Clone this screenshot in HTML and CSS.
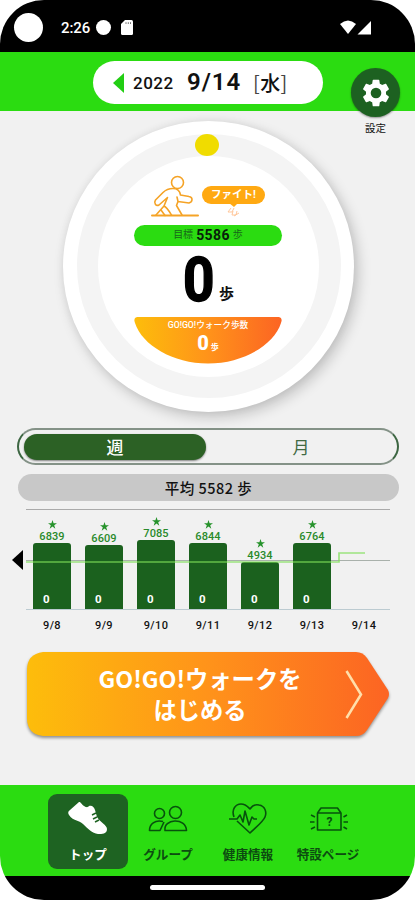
FILE: index.html
```html
<!DOCTYPE html>
<html lang="ja">
<head>
<meta charset="utf-8">
<title>GO!GO!ウォーク</title>
<link rel="stylesheet" href="styles.css">
</head>
<body>
<div class="phone">
  <div class="status">
    <span class="camera"></span>
    <span class="clock">2:26</span>
    <span class="notice"></span>
    <svg class="sd" viewBox="0 0 12 15"><path d="M4 0H10.500Q12 0 12 1.500V13.500Q12 15 10.500 15H1.500Q0 15 0 13.500V4Z"/><path class="sd-pins" d="M5 2.200V4M7.300 2.200V4M9.500 2.200V4"/></svg>
    <svg class="signal" viewBox="0 0 32 15"><path d="M0 4Q8-3 16 4L8 14Z"/><path d="M31 1V14.500H17.500Z"/></svg>
  </div>

  <header class="header">
    <div class="date">
      <svg class="prev" viewBox="0 0 11 20"><path d="M11 0V20L0 10Z"/></svg>
      <span class="year">2022</span>
      <span class="day">9/14</span>
      <span class="weekday"><i>[</i>水<i>]</i></span>
    </div>
    <div class="settings">
      <span class="gear">
        <svg viewBox="0 0 24 24"><path d="M19.430 12.980c.04-.32.07-.64.07-.98s-.03-.66-.07-.98l2.110-1.650c.19-.15.24-.42.12-.64l-2-3.460c-.12-.22-.39-.3-.61-.22l-2.490 1c-.52-.4-1.080-.73-1.690-.98l-.38-2.650C14.460 2.180 14.250 2 14 2h-4c-.25 0-.46.18-.49.42l-.38 2.650c-.61.25-1.170.59-1.690.98l-2.490-1c-.23-.09-.49 0-.61.22l-2 3.460c-.13.22-.07.49.12.64l2.110 1.650c-.04.32-.07.65-.07.98s.03.66.07.98l-2.110 1.650c-.19.15-.24.42-.12.64l2 3.460c.12.22.39.3.61.22l2.490-1c.52.4 1.080.73 1.690.98l.38 2.650c.03.24.24.42.49.42h4c.25 0 .46-.18.49-.42l.38-2.650c.61-.25 1.170-.59 1.690-.98l2.490 1c.23.09.49 0 .61-.22l2-3.460c.12-.22.07-.49-.12-.64z"/><circle cx="12" cy="12" r="4"/></svg>
      </span>
      <span class="settings-label">設定</span>
    </div>
  </header>

  <main class="main">
    <section class="dial">
      <span class="marker"></span>
      <div class="ring">
        <div class="face">
          <div class="cheer">
            <svg class="runner" viewBox="0 0 48 43">
              <circle cx="26.500" cy="7.500" r="6"/>
              <path d="M22 13.500C17 13.500 14 15.500 12 17.500L4.500 25C2.500 28 5 31.500 8 30L16.500 22.500M22 13.500C28 13.500 29 17 29.500 20L38 21.500C42 22 42 27 38 28L27 26.500L25.500 30.500L31 40M16.500 22.500L13 31C16 32.500 18 36 20.500 40M13 31L5 40M10 35L14 40.500M27 26.500L26 22"/>
              <path class="ground" d="M1 40.500H47"/>
            </svg>
            <div class="bubble">ファイト!
              <svg class="tail" viewBox="0 0 16 15"><path class="tip" d="M4 0H13L9 4Z"/><path class="dust" d="M6 5L3 9H7L9 5M8 8L7 12H11L12 8M9 13L14 10"/></svg>
            </div>
          </div>
          <div class="goal"><span>目標</span><b>5586</b><span>歩</span></div>
          <div class="steps"><b>0</b><span>歩</span></div>
          <div class="gogo">
            <svg class="bowl" viewBox="0 0 148 47">
              <defs><linearGradient id="warm" x1="0" x2="1" y1="0" y2="0"><stop offset="0" stop-color="#fdbd0b"/><stop offset=".5" stop-color="#ff931a"/><stop offset="1" stop-color="#fc6423"/></linearGradient></defs>
              <path d="M3 0H145Q149 1 147 6C140 28 109 46.500 74 46.500S8 28 1 6Q-1 1 3 0Z" fill="url(#warm)"/>
            </svg>
            <span class="gogo-title">GO!GO!ウォーク歩数</span>
            <span class="gogo-value"><b>0</b>歩</span>
          </div>
        </div>
      </div>
    </section>

    <div class="segments"><span class="segment on">週</span><span class="segment">月</span></div>
    <div class="average">平均 5582 歩</div>

    <section class="chart">
      <svg width="0" height="0" class="defs"><symbol id="star" viewBox="0 0 10 10"><path d="M5 0L6.200 3.600H10L6.900 5.900L8.100 9.600L5 7.300L1.900 9.600L3.100 5.900L0 3.600H3.800Z"/></symbol></svg>
      <div class="bars">
        <div class="col"><svg class="star"><use href="#star"/></svg><span class="value">6839</span><div class="bar" style="height:66px">0</div></div>
        <div class="col"><svg class="star"><use href="#star"/></svg><span class="value">6609</span><div class="bar" style="height:64px">0</div></div>
        <div class="col"><svg class="star"><use href="#star"/></svg><span class="value">7085</span><div class="bar" style="height:69px">0</div></div>
        <div class="col"><svg class="star"><use href="#star"/></svg><span class="value">6844</span><div class="bar" style="height:66px">0</div></div>
        <div class="col"><svg class="star"><use href="#star"/></svg><span class="value">4934</span><div class="bar" style="height:47px">0</div></div>
        <div class="col"><svg class="star"><use href="#star"/></svg><span class="value">6764</span><div class="bar" style="height:66px">0</div></div>
        <div class="col"></div>
      </div>
      <svg class="target" viewBox="0 0 364 100"><path d="M0 53H313V44H339"/></svg>
      <div class="days"><span>9/8</span><span>9/9</span><span>9/10</span><span>9/11</span><span>9/12</span><span>9/13</span><span>9/14</span></div>
      <svg class="older" viewBox="0 0 11 20"><path d="M11 0V20L0 10Z"/></svg>
    </section>

    <div class="start">
      <svg class="start-shape" viewBox="0 0 363 84"><path d="M16 0H329Q336 0 340 6L361 38Q363 42 361 46L340 78Q336 84 329 84H16Q0 82 0 66V18Q0 2 16 0Z" fill="url(#warm)"/><path class="chevron" d="M319.500 19L334 42.500L319.500 66"/></svg>
      <span class="start-text">GO!GO!ウォークを<br>はじめる</span>
    </div>
  </main>

  <nav class="tabs">
    <div class="tab active">
      <svg viewBox="0 0 40 34"><path class="shoe" d="M11 1C13 1 13 3 16 5C19 7 20 6 21 5C24 4 26 6 27 9L29 16C32 21 39 24 39 28C39 33 34 33 30 33C24 32 20 28 15 23C11 19 5 20 1 14Q-1 11 2 9Z"/><path class="laces" d="M28 12L24 14M29 16L25 18M31 19L27 21"/></svg>
      <span>トップ</span>
    </div>
    <div class="tab">
      <svg viewBox="0 0 40 34"><circle cx="11.500" cy="12.500" r="5"/><circle cx="27.500" cy="11.500" r="6"/><path d="M15 20.500C7 18.500 1.500 23 1.500 29.500H12L16 21M17 29.500C15 17.500 38 16 38.500 29.500Z"/></svg>
      <span>グループ</span>
    </div>
    <div class="tab">
      <svg viewBox="0 0 40 34"><path d="M6 16C3 8 8 3 13 3C18 3 20 6 22 8C24 5 27 3 31 4C37 5 39 11 37 16C35 21 27 27 22 32L9 20M1 18H9L12 14L15 21L17 10L21 24L24 16L26 18H29"/></svg>
      <span>健康情報</span>
    </div>
    <div class="tab">
      <svg viewBox="0 0 40 34"><path d="M9.500 12H33V29H9.500ZM9.500 12L13 7H29.500L33 12M3 14L7 16M2 21H6.500M3 28L7 26M39 14L35.500 16M40 21H35.500M39 28L35.500 26"/><text x="21.500" y="25">?</text></svg>
      <span>特設ページ</span>
    </div>
  </nav>
  <div class="home"><span></span></div>
</div>
</body>
</html>
```

FILE: styles.css
```css
* { box-sizing: border-box; }
body { margin: 0; background: #fff; font-family: Roboto, "Noto Sans CJK JP", sans-serif; color: #111; }
svg { display: block; }
.phone { width: 415px; height: 900px; display: flex; flex-direction: column; border-radius: 44px; overflow: hidden; background: #f1f1f1; }

.status { height: 52px; flex: none; background: #000; color: #fff; display: flex; align-items: center; padding: 3px 43px 0 14px; }
.camera { width: 29px; height: 29px; border-radius: 50%; background: #fff; }
.clock { margin-left: 18px; width: 30px; font-size: 15px; font-weight: 500; letter-spacing: -.1px; padding-top: 1px; }
.notice { width: 15px; height: 15px; margin-left: 5px; border-radius: 50%; background: #fff; }
.sd { width: 12px; height: 15px; margin-left: 10px; fill: #fff; }
.sd-pins { stroke: #555; stroke-width: .8; }
.signal { width: 32px; height: 15px; margin-left: auto; fill: #fff; }

.header { height: 59px; flex: none; background: #2bdc11; position: relative; padding: 9px 0 0 93px; }
.date { width: 230px; height: 43px; border-radius: 22px; background: #fff; display: flex; align-items: center; padding-left: 20px; white-space: nowrap; }
.prev { width: 11px; height: 20px; fill: #22ce13; }
.year { margin-left: 9px; width: 41px; font-size: 17px; font-weight: 500; letter-spacing: .5px; }
.day { margin-left: 13px; width: 54px; font-size: 24px; line-height: 28px; font-weight: 600; letter-spacing: 1px; padding-bottom: 1px; height: 30px; }
.weekday { margin-left: 12px; font: 500 20px "Noto Sans CJK JP", sans-serif; letter-spacing: .4px; }
.weekday i { font-style: normal; font-weight: 400; color: #444; }
.settings { position: absolute; z-index: 2; left: 351px; top: 16px; width: 49px; display: flex; flex-direction: column; align-items: center; }
.gear { width: 49px; height: 49px; border-radius: 50%; background: #1d6121; display: flex; align-items: center; justify-content: center; box-shadow: 0 1px 2px #0006; }
.gear svg { width: 32px; height: 32px; fill: #fff; }
.gear circle { fill: #1d6121; }
.settings-label { margin-top: 4px; font-size: 10.500px; line-height: 16px; }

.main { flex: 1; display: flex; flex-direction: column; }
.dial { position: relative; flex: none; width: 291px; height: 291px; margin: 9.500px 0 0 63px; border-radius: 50%; background: #fff; padding: 13.500px; box-shadow: 4px 5px 14px #0003, 0 0 8px #0000000d; }
.marker { position: absolute; left: 132px; top: 13px; width: 24px; height: 22px; border-radius: 50%; background: #f0dc00; }
.ring { height: 264px; border-radius: 50%; background: #f4f4f4; padding: 21.500px; }
.face { height: 221px; border-radius: 50%; background: #fff; display: flex; flex-direction: column; align-items: center; padding: 19px 1px 0 0; }
.cheer { height: 43px; width: 114px; display: flex; flex: none; }
.runner { width: 48px; height: 43px; fill: none; stroke: #f5a326; stroke-width: 1.600; stroke-linecap: round; stroke-linejoin: round; }
.ground { stroke-width: 2; }
.bubble { position: relative; width: 63px; height: 18px; margin: 11px 0 0 3px; border-radius: 9px; background: #ffa912; color: #fff; font-size: 10.500px; line-height: 18px; text-align: center; font-weight: 700; white-space: nowrap; flex: none; }
.tail { position: absolute; width: 16px; height: 15px; left: 23px; top: 17px; }
.tip { fill: #ffa912; }
.dust { fill: none; stroke: #ffc79b; stroke-width: 1; }
.goal { width: 148px; height: 21px; margin-top: 7px; border-radius: 11px; background: #2bdc11; display: flex; justify-content: center; align-items: center; gap: 3px; font-size: 10px; flex: none; line-height: 20px; color: #17671a; }
.goal b { font-size: 14px; letter-spacing: .4px; color: #08200a; }
.steps { height: 71px; width: 148px; display: flex; align-items: flex-end; flex: none; padding-left: 49px; }
.steps b { font-family: Roboto, sans-serif; font-size: 61px; line-height: 72px; width: 36px; height: 73px; -webkit-text-stroke: 1.500px #000; color: #000; transform: scaleX(.9); transform-origin: left; }
.steps span { font-size: 15px; line-height: 20px; font-weight: 700; margin-bottom: 13px; }
.gogo { position: relative; width: 148px; height: 47px; flex: none; display: flex; flex-direction: column; align-items: center; color: #fff; }
.bowl { position: absolute; left: 0; top: 0; width: 148px; height: 47px; }
.gogo-title { position: relative; font-size: 8.700px; line-height: 12px; margin-top: 2px; font-weight: 500; white-space: nowrap; }
.gogo-value { position: relative; font-size: 8px; line-height: 24px; font-weight: 700; }
.gogo-value b { font-size: 20px; margin-right: 2px; }

.segments { width: 382px; height: 37px; margin: 16.500px 0 0 17px; border: 2px solid #3d6642; border-top-color: #849287; border-bottom-color: #849287; border-radius: 19px; display: flex; padding: 4px 5px; flex: none; }
.segment { width: 182px; height: 26px; border-radius: 13px; text-align: center; font: 17px/26px "Noto Sans CJK JP", sans-serif; color: #416a43; padding-left: 8px; }
.segment.on { background: #2c6125; color: #fff; font-weight: 500; box-shadow: 0 1px 2px #0007; padding-left: 0; }
.average { width: 381px; height: 27px; margin: 9px 0 0 18px; border-radius: 14px; background: #c8c8c8; text-align: center; font: 500 14.500px/28px "Noto Sans CJK JP", sans-serif; letter-spacing: .5px; flex: none; }

.chart { position: relative; margin: 8px 0 0 26px; width: 364px; height: 126px; flex: none; }
.defs { position: absolute; }
.bars { height: 101px; display: flex; align-items: flex-end; border-top: 1px solid #aaa; border-bottom: 1px solid #bccbd1; background: linear-gradient(#a9b1ab, #a9b1ab) 0 50px / 100% 1px no-repeat; }
.col { width: 52px; display: flex; flex-direction: column; align-items: center; }
.star { width: 9px; height: 9px; margin-bottom: 1px; fill: #26922b; }
.value { font-size: 11px; line-height: 13px; font-weight: 500; letter-spacing: .1px; color: #298a2b; }
.bar { width: 38px; border-radius: 3px 3px 0 0; background: #1b611e; color: #fff; display: flex; align-items: flex-end; padding: 0 0 3px 10px; font-size: 11.500px; line-height: 13px; font-weight: 700; }
.target { position: absolute; left: 0; top: 0; width: 364px; height: 100px; fill: none; stroke: #7fdd58; stroke-opacity: .75; stroke-width: 1.700; }
.days { display: flex; padding-top: 7px; font-size: 11px; line-height: 18px; font-weight: 500; letter-spacing: .4px; }
.days span { width: 52px; text-align: center; }
.older { position: absolute; left: -14px; top: 41px; width: 11px; height: 20px; }

.start { position: relative; width: 363px; height: 84px; margin: 17px 0 0 27px; flex: none; }
.start-shape { position: absolute; left: 0; top: 0; width: 363px; height: 84px; overflow: visible; filter: drop-shadow(0 2px 1.500px #0006); }
.chevron { fill: none; stroke: #ffdfab; stroke-width: 2.500; }
.start-text { position: relative; display: block; padding: 11px 0 0 0; width: 346px; text-align: center; color: #fff; font: 700 23.300px/31px "Noto Sans CJK JP", sans-serif; white-space: nowrap; }

.tabs { height: 91px; flex: none; background: #2bdc11; display: flex; padding: 9px 0 0 48px; }
.tab { width: 80px; height: 75px; display: flex; flex-direction: column; align-items: center; padding-top: 7px; border-radius: 9px; font: 700 12.600px/18px "Noto Sans CJK JP", sans-serif; color: #0c4c10; white-space: nowrap; }
.tab svg { width: 40px; height: 34px; margin-bottom: 10px; fill: none; stroke: #07520d; stroke-width: 1.600; stroke-linejoin: round; }
.tab text { font: 700 12px Roboto, sans-serif; fill: #07520d; stroke: none; text-anchor: middle; }
.active { background: #1e6322; color: #fff; }
.tab .shoe { fill: #fff; stroke: none; }
.tab .laces { stroke: #1e6322; stroke-width: 1.500; }
.home { height: 24px; flex: none; background: #000; display: flex; justify-content: center; padding-top: 9px; }
.home span { width: 115px; height: 5px; border-radius: 3px; background: #fff; }
```
